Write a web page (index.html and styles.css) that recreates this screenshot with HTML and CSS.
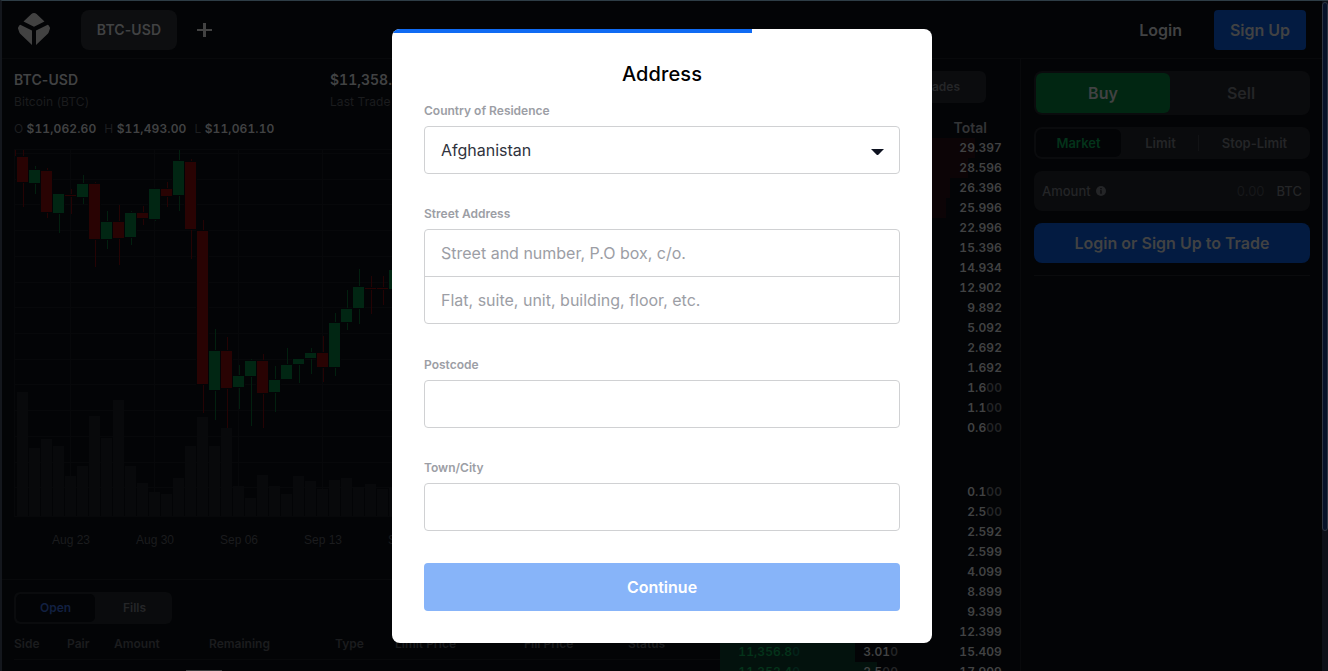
FILE: index.html
```html
<!DOCTYPE html>
<html lang="en">
<head>
<meta charset="utf-8">
<title>BTC-USD</title>
<link rel="stylesheet" href="styles.css">
</head>
<body>
<div class="app">
  <header class="topbar">
    <svg class="logo" width="34" height="34" viewBox="0 0 34 34"><path d="M16 0q1.500 0 2.600 1L26.500 8.500 16 13.700 5.500 8.500 13.400 1Q14.500 0 16 0zM2.800 12 14 17.400V32L2.200 20.700Q1.500 20 1.200 19L0 15.500Q-.1 14.900.2 14.200L1.300 12.400Q1.900 11.600 2.800 12zM29.200 12 18 17.400V32L29.800 20.700Q30.500 20 30.800 19L32 15.500Q32.100 14.900 31.800 14.200L30.700 12.400Q30.100 11.600 29.200 12z"/></svg>
    <div class="pair-tab">BTC-USD</div>
    <svg class="plus" width="16" height="16" viewBox="0 0 16 16"><path d="M7 1h3v6h6v2h-6v6H7V9H1V7h6z"/></svg>
    <a class="login">Login</a>
    <button class="signup">Sign Up</button>
  </header>
  <div class="columns">
    <section class="market">
      <div class="ticker">
        <div class="quote"><b>BTC-USD</b><span>Bitcoin (BTC)</span></div>
        <div class="quote"><b class="last">$11,358.50</b><span>Last Trade</span></div>
      </div>
      <div class="ohlc"><span>O <b>$11,062.60</b></span><span>H <b>$11,493.00</b></span><span>L <b>$11,061.10</b></span></div>
      <svg class="chart" id="chart" width="706" height="374" viewBox="14 146 706 374" shape-rendering="crispEdges"></svg>
      <div class="dates"><span>Aug 23</span><span>Aug 30</span><span>Sep 06</span><span>Sep 13</span><span>Sep 20</span></div>
      <div class="orders">
        <div class="order-tabs"><span class="on">Open</span><span>Fills</span></div>
        <div class="order-head"><span>Side</span><span>Pair</span><span>Amount</span><span>Remaining</span><span>Type</span><span>Limit Price</span><span>Fill Price</span><span>Status</span></div>
        <div class="order-thumb"></div>
      </div>
    </section>
    <section class="book">
      <div class="book-tabs"><span>Order Book</span><span>Trades</span></div>
      <div class="book-head">Total</div>
      <div class="rows" id="asks"></div>
      <div class="rows bids" id="bids"></div>
    </section>
    <section class="trade">
      <div class="side"><span class="buy">Buy</span><span>Sell</span></div>
      <div class="kind"><span class="market-on">Market</span><span class="limit">Limit</span><span class="stop">Stop-Limit</span></div>
      <div class="amount"><span>Amount</span><svg width="10" height="10" viewBox="0 0 10 10"><circle cx="5" cy="5" r="5"/><path d="M4.300 2h1.400v1.200H4.300zM4 4.200h1.700v3.600H4.300V5H4z"/></svg><span class="zero">0.00</span><span>BTC</span></div>
      <button class="cta">Login or Sign Up to Trade</button>
      <hr>
    </section>
  </div>
  <div class="scroll"><div class="thumb"></div></div>
</div>
<form class="modal">
  <div class="progress"><div class="progress-fill"></div></div>
  <h1>Address</h1>
  <div class="field"><label>Country of Residence</label><div class="input select"><span>Afghanistan</span><svg width="13" height="6" viewBox="0 0 13 6"><path d="M0 0h13L7.300 5.700q-.8.600-1.600 0z"/></svg></div></div>
  <div class="field"><label>Street Address</label><div class="stack"><div>Street and number, P.O box, c/o.</div><div>Flat, suite, unit, building, floor, etc.</div></div></div>
  <div class="field"><label>Postcode</label><div class="input"></div></div>
  <div class="field"><label>Town/City</label><div class="input"></div></div>
  <button class="continue" type="button">Continue</button>
</form>
<script src="script.js"></script>
</body>
</html>
```
FILE: styles.css
```css
* { box-sizing: border-box; }
body { margin: 0; width: 1328px; height: 671px; overflow: hidden; position: relative; background: #030406; font-family: Inter, "Liberation Sans", sans-serif; font-size: 12px; }
button { border: 0; padding: 0; font-family: inherit; }
.app { position: relative; width: 1328px; height: 671px; overflow: hidden; border-left: 2px solid #14171d; border-top: 1px solid #2e3d46; }
.topbar { height: 58px; display: flex; align-items: center; border-bottom: 1px solid #08090b; padding: 0 22px 0 16px; color: #414243; }
.logo { fill: #424242; overflow: visible; width: 34px; height: 34px; }
.pair-tab { margin-left: 29px; width: 96px; height: 40px; border-radius: 8px; background: #0d0e10; display: flex; align-items: center; justify-content: center; font-size: 14px; font-weight: 600; letter-spacing: .1px; }
.plus { margin-left: 19px; fill: #424242; }
.login { margin-left: auto; font-size: 16px; font-weight: 600; }
.signup { margin-left: 32px; width: 92px; height: 40px; border-radius: 4px; background: #031b41; color: #414243; font-size: 16px; font-weight: 600; }
.columns { display: grid; grid-template-columns: 718px 301px 299px; height: 612px; }
.market { overflow: hidden; }
.ticker { display: flex; padding: 12px 0 0 12px; }
.quote { width: 316px; display: flex; flex-direction: column; }
.quote b { color: #414243; font-size: 14px; line-height: 17px; font-weight: 600; letter-spacing: .1px; }
.quote .last { font-variant-numeric: tabular-nums; letter-spacing: 0; }
.quote span { color: #1b1c1e; line-height: 15px; margin-top: 6px; letter-spacing: .08px; }
.ohlc { display: flex; gap: 8px; padding: 12px 0 0 12px; line-height: 16px; color: #1d1e20; }
.ohlc b { color: #414243; font-weight: 600; font-variant-numeric: tabular-nums; letter-spacing: .12px; }
.chart { display: block; margin: 9px 0 0 12px; }
.dates { display: flex; padding: 13px 0 0 27px; line-height: 15px; color: #1b1c1e; font-family: "Liberation Sans", Arial, sans-serif; }
.dates span { width: 84px; text-align: center; flex: none; }
.orders { margin-top: 31px; border-top: 1px solid #08090b; padding: 12px 0 0 12px; }
.order-tabs { width: 158px; height: 32px; padding: 2px; border-radius: 6px; background: #0a0b0d; display: flex; align-items: center; color: #252628; font-weight: 600; }
.order-tabs span { flex: 1; text-align: center; line-height: 28px; padding-left: 4px; }
.order-tabs .on { flex: none; width: 79px; padding: 0; background: #030406; color: #122041; border-radius: 5px; }
.order-head { display: grid; grid-template-columns: 53px 47px 95px 126px 60px 129px 104px 80px; line-height: 16px; height: 36px; padding-top: 12px; color: #1b1c1e; font-weight: 600; border-bottom: 1px solid #08090b; }
.order-thumb { width: 36px; height: 2px; margin: 10px 0 0 172px; background: #3a3b3d; }
.book { border-right: 1px solid #08090b; overflow: hidden; }
.book-tabs { display: flex; height: 32px; margin: 12px 34px 0 14px; padding: 2px 26px 2px; border-radius: 6px; background: #0b0c0e; justify-content: space-between; line-height: 28px; color: #252628; font-weight: 600; }
.book-head { text-align: right; padding-right: 33px; margin-top: 15px; height: 20px; line-height: 20px; font-size: 14px; font-weight: 600; color: #333436; }
.row { height: 20px; line-height: 20px; display: grid; grid-template-columns: 80px 98px 104px; text-align: right; font-weight: 600; font-variant-numeric: tabular-nums; letter-spacing: .1px; color: #414243; background: linear-gradient(#0c0406, #0c0406) no-repeat 0 0 / var(--depth) 100%; }
.row i { font-style: normal; color: #222325; }
.bids { margin-top: 44px; }
.bids .row { background-image: linear-gradient(#03120d, #03120d); }
.bids .price { color: #04331a; }
.bids .price i { color: #04221a; }
.trade { padding: 12px 10px 0 13px; color: #242527; font-weight: 600; }
.side { display: flex; height: 44px; padding: 2px; border-radius: 8px; background: #0a0b0d; font-size: 16px; line-height: 40px; text-align: center; }
.side span { flex: 1; padding-left: 4px; }
.side .buy { flex: none; width: 134px; padding: 0; border-radius: 6px; background: #012612; color: #414243; }
.kind { display: flex; align-items: center; height: 32px; margin-top: 12px; padding: 2px; border-radius: 8px; background: #0a0b0d; font-size: 13px; text-align: center; line-height: 28px; }
.market-on { width: 85px; border-radius: 6px; background: #030406; color: #03331a; }
.limit { width: 78px; line-height: 16px; border-right: 1px solid #121315; padding-left: 2px; }
.stop { flex: 1; line-height: 16px; padding-left: 2px; }
.amount { display: flex; align-items: center; height: 40px; margin-top: 12px; padding: 0 8px; border-radius: 8px; background: #0a0b0d; font-size: 13px; font-weight: 500; }
.amount svg { margin-left: 5px; fill: #242527; }
.amount svg path { fill: #0a0b0d; }
.amount .zero { margin: 0 12px 0 auto; color: #17181a; font-weight: 400; }
.cta { display: block; width: 100%; height: 40px; margin-top: 12px; border-radius: 8px; background: #031b41; color: #414243; font-size: 16px; font-weight: 600; }
hr { border: 0; border-top: 1px solid #0a0b0d; margin: 12px 0 0; }
.scroll { position: absolute; right: 0; top: 0; width: 6px; height: 670px; background: #0d1018; }
.thumb { height: 529px; margin-top: 1px; border: 1px solid #2d3441; border-radius: 3px; background: #071229; }
.modal { position: absolute; left: 392px; top: 29px; width: 540px; height: 614px; background: #fff; border-radius: 8px; overflow: hidden; padding: 0 32px; }
.progress { margin: 0 -32px; height: 4px; }
.progress-fill { width: 360px; height: 4px; background: #106bf3; }
h1 { margin: 29px 0 0; text-align: center; font-size: 20px; line-height: 24px; font-weight: 500; color: #000; letter-spacing: .12px; }
.field { display: flex; flex-direction: column; }
label { font-size: 12px; line-height: 16px; font-weight: 600; color: #9c9ea5; margin-bottom: 7px; }
.field + .field { margin-top: 32px; }
h1 + .field { margin-top: 17px; }
.input, .stack { border: 1px solid #d0d1d3; border-radius: 4px; font-size: 16px; }
.input { height: 48px; }
.select { display: flex; align-items: center; justify-content: space-between; padding: 0 15px 0 16px; color: #30333d; }
.select svg { fill: #0e1220; margin-top: 4px; }
.stack { height: 95px; margin-bottom: 1px; color: #9c9ea5; }
.stack div { height: 46px; line-height: 46px; padding-left: 16px; }
.stack div + div { border-top: 1px solid #d0d1d3; height: 47px; }
.continue { display: block; width: 100%; height: 48px; margin-top: 32px; border-radius: 4px; background: #87b4f9; color: #fff; font-size: 16px; font-weight: 600; }
```
FILE: script.js
```js
// [direction, body top, body bottom, wick top, wick bottom]
const candles = [
  ['r',157,182,150,207],['g',170,183,166,194],['r',171,212,168,218],['g',194,213,194,233],
  ['r',195,196,189,214],['g',184,197,175,204],['r',184,239,182,267],['g',222,239,211,249],
  ['r',222,238,205,265],['g',213,237,211,245],['r',213,218,206,225],['g',189,219,189,221],
  ['r',189,196,182,207],['g',161,195,150,211],['r',162,229,159,259],['r',231,384,220,413],
  ['g',351,390,329,420],['r',351,388,337,428],['g',376,387,365,409],['g',361,376,359,426],
  ['r',361,393,354,428],['g',380,392,366,412],['g',365,379,348,379],['g',359,364,359,383],
  ['g',353,358,348,374],['r',353,367,336,382],['g',323,367,313,376],['g',309,322,290,330],
  ['g',287,308,269,324],['r',288,289,276,314],['r',288,289,276,305],['g',270,289,262,296]
];
const volumes = [392,448,439,446,476,466,416,438,400,466,483,492,494,478,446,417,446,428,486,498,475,486,494,476,481,489,480,478,487,484,489,488];
const rect = (x, y, w, h, f) => `<rect x="${x}" y="${y}" width="${w}" height="${h}" fill="${f}"/>`;
let out = '';
for (const y of [149,153,179,204,230,256,282,307,333,359,384,410,436,462,487,516]) out += rect(14, y, 706, 1, '#07080a');
for (const x of [14,70,154,238,322]) out += rect(x, 149, 1, 368, '#07080a');
volumes.forEach((y, i) => { out += rect(17 + i * 12, y, 11, 516 - y, '#08090b'); });
out += rect(15, 150, 1, 6, '#250304');
candles.forEach(([d, a, b, t, u], i) => {
  const x = 17 + i * 12, body = d === 'r' ? '#290303' : '#012613';
  out += rect(x + 6, t, 1, u - t, d === 'r' ? '#250304' : '#02200f');
  out += rect(x - 1, a - 1, 13, b - a + 2, '#030406') + rect(x, a, 11, b - a, body);
});
document.getElementById('chart').innerHTML = out;

const split = s => { const m = s.match(/^(.*?)(0*)$/); return m[1] + (m[2] ? `<i>${m[2]}</i>` : ''); };
const row = ([total, depth = 0, price = '', size = '']) =>
  `<div class="row" style="--depth:${depth}px"><span class="price">${split(price)}</span><span>${split(size)}</span><span>${split(total)}</span></div>`;
document.getElementById('asks').innerHTML = [
  ['29.397',255],['28.596',248],['26.396',230],['25.996',226],['22.996',200],['15.396',134],['14.934',130],['12.902',112],
  ['9.892',86],['5.092',44],['2.692',23],['1.692',15],['1.600',14],['1.100',10],['0.600',5]
].map(row).join('');
document.getElementById('bids').innerHTML = [
  ['0.100',1],['2.500',22],['2.592',23],['2.599',23],['4.099',36],['8.899',77],['9.399',82],['12.399',108],
  ['15.409',135,'11,356.80','3.010'],['17.909',157,'11,352.40','2.500']
].map(row).join('');
```
